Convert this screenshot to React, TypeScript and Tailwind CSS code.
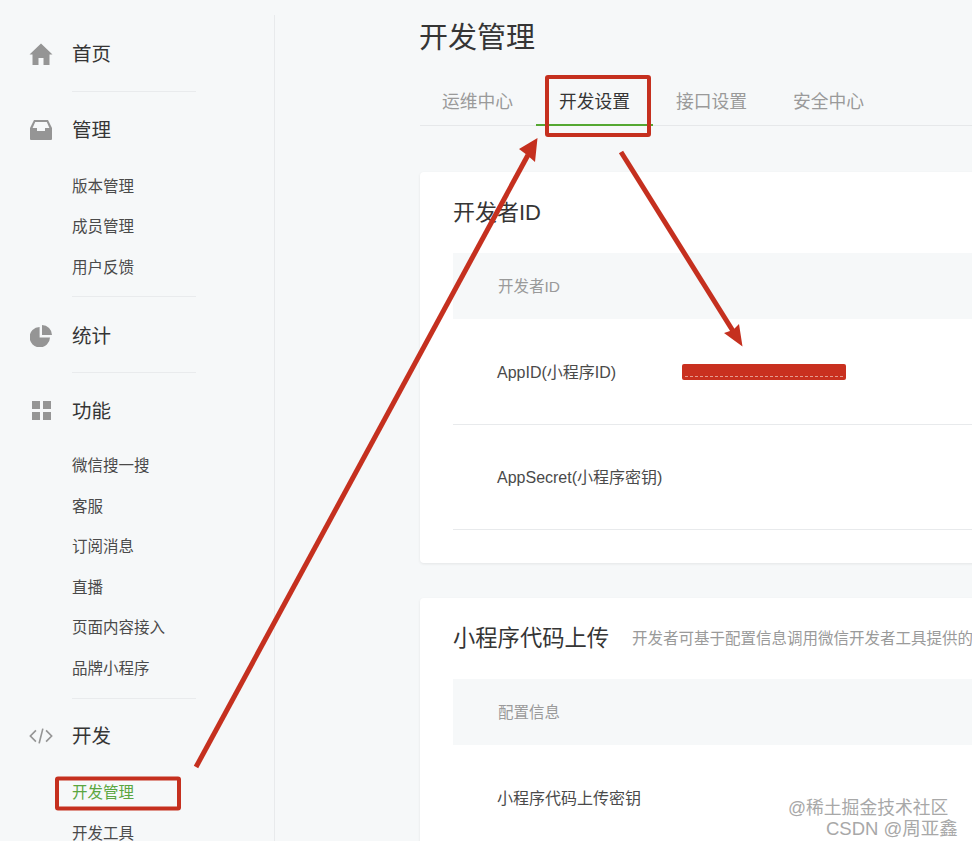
import type { ReactNode } from 'react';

const font = { fontFamily: '"Liberation Sans", "Noto Sans CJK SC", sans-serif' };

function NavHead({ icon, label, className = '' }: { icon: ReactNode; label: string; className?: string }) {
  return (
    <div className={`flex h-10 items-center ${className}`}>
      <div className="ml-[29px] mr-[19px] flex w-6 justify-center">{icon}</div>
      <span className="pt-[2px] text-[19.5px] text-[#353535]">{label}</span>
    </div>
  );
}

function NavSub({ label, active }: { label: string; active?: boolean }) {
  return (
    <div className={`flex h-[40.5px] items-center pl-[72px] text-[15.5px] ${active ? 'text-[#5aa640]' : 'text-[#4a4a4a]'}`}>
      {label}
    </div>
  );
}

function Divider({ className = '' }: { className?: string }) {
  return <div className={`ml-[72px] h-px w-[124px] bg-[#e9ebed] ${className}`} />;
}

function Sidebar() {
  return (
    <aside className="mt-[15px] h-[900px] w-[275px] shrink-0 border-r border-[#e8eaec] pt-[19px]">
      <NavHead
        label="首页"
        icon={
          <svg width="24" height="23" viewBox="0 0 24 23" fill="#959595">
            <path d="M12 0.5 L23.5 11.5 L20.5 11.5 L20.5 22 L14.5 22 L14.5 15 L9.5 15 L9.5 22 L3.5 22 L3.5 11.5 L0.5 11.5 Z" />
          </svg>
        }
      />
      <Divider className="mt-[17px]" />
      <NavHead
        className="mt-[18px]"
        label="管理"
        icon={
          <svg width="22" height="20" viewBox="0 0 22 20" fill="#959595">
            <path d="M4 0 H18 L22 8 V19 A1 1 0 0 1 21 20 H1 A1 1 0 0 1 0 19 V8 Z M5.2 2 L2.6 8 H7 V11 H15 V8 H19.4 L16.8 2 Z" fillRule="evenodd" />
          </svg>
        }
      />
      <div className="mt-4">
        <NavSub label="版本管理" />
        <NavSub label="成员管理" />
        <NavSub label="用户反馈" />
      </div>
      <Divider className="mt-2" />
      <NavHead
        className="mt-[19px]"
        label="统计"
        icon={
          <svg width="22" height="22" viewBox="0 0 22 22" fill="#959595">
            <path d="M9.6 2 V12.4 H20 A10.2 10.2 0 1 1 9.6 2 Z" />
            <path d="M12 0 A10 10 0 0 1 22 10 H12 Z" />
          </svg>
        }
      />
      <Divider className="mt-4" />
      <NavHead
        className="mt-[18px]"
        label="功能"
        icon={
          <svg width="19" height="19" viewBox="0 0 19 19" fill="#959595">
            <rect x="0" y="0" width="8" height="8" />
            <rect x="11" y="0" width="8" height="8" />
            <rect x="0" y="11" width="8" height="8" />
            <rect x="11" y="11" width="8" height="8" />
          </svg>
        }
      />
      <div className="mt-[15px]">
        <NavSub label="微信搜一搜" />
        <NavSub label="客服" />
        <NavSub label="订阅消息" />
        <NavSub label="直播" />
        <NavSub label="页面内容接入" />
        <NavSub label="品牌小程序" />
      </div>
      <Divider className="mt-[9px]" />
      <NavHead
        className="mt-[17px]"
        label="开发"
        icon={
          <svg width="26" height="18" viewBox="0 0 26 18" fill="none" stroke="#959595" strokeWidth="1.8">
            <path d="M7.5 3 L1.5 9 L7.5 15" />
            <path d="M18.5 3 L24.5 9 L18.5 15" />
            <path d="M15 1 L11 17" />
          </svg>
        }
      />
      <div className="mt-[17px]">
        <NavSub label="开发管理" active />
        <NavSub label="开发工具" />
      </div>
    </aside>
  );
}

function Tab({ label, active }: { label: string; active?: boolean }) {
  return (
    <div
      className={`-mb-px flex h-[48px] w-[117px] items-center justify-center border-b-2 pt-[2px] text-[17.8px] ${
        active ? 'border-[#55a832] text-[#353535]' : 'border-transparent text-[#9a9a9a]'
      }`}
    >
      {label}
    </div>
  );
}

function TableHead({ label }: { label: string }) {
  return <div className="flex h-[66px] items-center bg-[#f6f8f9] pl-[45px] pt-[2px] text-[15.5px] text-[#9a9a9a]">{label}</div>;
}

function Row({ label, children, className = '' }: { label: string; children?: ReactNode; className?: string }) {
  return (
    <div className={`flex items-center pl-[44px] text-[16px] text-[#4a4a4a] ${className}`}>
      <span className="w-[185px] shrink-0 whitespace-nowrap pt-[2px]">{label}</span>
      {children}
    </div>
  );
}

function Annotations() {
  return (
    <svg className="pointer-events-none absolute left-0 top-0" width="972" height="841" viewBox="0 0 972 841" fill="none">
      <rect x="57" y="778.5" width="122" height="30" rx="1" stroke="#c5301f" strokeWidth="4" />
      <rect x="547" y="77" width="102" height="58" rx="1" stroke="#c5301f" strokeWidth="4" />
      <path d="M196 767 L528 155" stroke="#c5301f" strokeWidth="5" />
      <polygon points="537.5,138 535,162 527,155 519,149" fill="#c5301f" />
      <path d="M621 152 L733 331" stroke="#c5301f" strokeWidth="5" />
      <polygon points="742.5,346.5 724,333 733,330 739,324" fill="#c5301f" />
    </svg>
  );
}

export default function App() {
  return (
    <div className="relative flex h-screen w-full overflow-hidden bg-[#f6f8f9]" style={font}>
      <Sidebar />
      <main className="ml-[144px] min-w-0 flex-1">
        <h1 className="mt-[17px] h-[42px] text-[29px] leading-[42px] text-[#353535]">开发管理</h1>
        <div className="ml-px mt-[19px] flex h-[48px] border-b border-[#e6e8ea]">
          <div className="-ml-px flex">
            <Tab label="运维中心" />
            <Tab label="开发设置" active />
            <Tab label="接口设置" />
            <Tab label="安全中心" />
          </div>
        </div>

        <section className="ml-px mt-[46px] h-[391px] w-[600px] rounded-sm bg-white pl-[33px] shadow-[0_1px_3px_rgba(0,0,0,0.08)]">
          <h2 className="flex h-[81px] items-center text-[22px] text-[#353535]">开发者ID</h2>
          <TableHead label="开发者ID" />
          <Row label="AppID(小程序ID)" className="h-[106px] border-b border-[#e8eaec]">
            <div className="flex h-[16px] w-[164px] items-end rounded-[2px] bg-[#c9301f] px-[3px] pb-[3px]">
              <div className="w-full border-b border-dashed border-[#e59a8e]" />
            </div>
          </Row>
          <Row label="AppSecret(小程序密钥)" className="h-[105px] border-b border-[#e8eaec]" />
        </section>

        <section className="ml-px mt-[35px] h-[400px] w-[600px] rounded-sm bg-white pl-[33px] shadow-[0_1px_3px_rgba(0,0,0,0.08)]">
          <div className="flex h-[81px] items-center whitespace-nowrap">
            <h2 className="text-[22.3px] text-[#353535]">小程序代码上传</h2>
            <span className="ml-[23px] text-[15.5px] text-[#9a9a9a]">开发者可基于配置信息调用微信开发者工具提供的</span>
          </div>
          <TableHead label="配置信息" />
          <Row label="小程序代码上传密钥" className="h-[105px]" />
        </section>
      </main>

      <Annotations />

      <div className="absolute left-[788px] top-[797px] whitespace-nowrap text-[17.8px] leading-[22px] text-[#a8a8a8]">@稀土掘金技术社区</div>
      <div className="absolute left-[826px] top-[818px] whitespace-nowrap text-[18.5px] leading-[22px] text-[#a8a8a8]">CSDN @周亚鑫</div>
    </div>
  );
}
